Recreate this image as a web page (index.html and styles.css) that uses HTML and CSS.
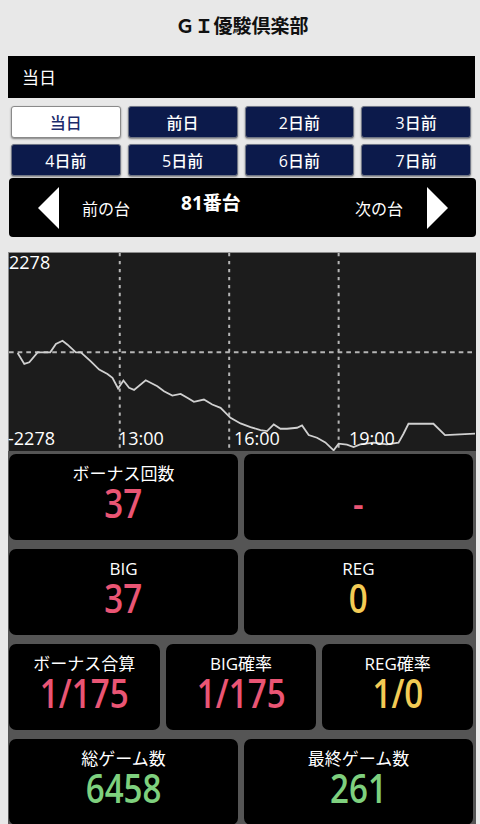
FILE: index.html
```html
<!DOCTYPE html>
<html lang="ja">
<head>
    <meta charset="UTF-8">
    <meta name="viewport" content="width=device-width, initial-scale=1.0">
    <title>ＧＩ優駿倶楽部</title>
    <link rel="stylesheet" href="styles.css">
</head>
<body>

    <h1 class="title">ＧＩ優駿倶楽部</h1>

    <div class="day-bar">当日</div>

    <div class="day-buttons">
        <button class="day-btn active">当日</button>
        <button class="day-btn">前日</button>
        <button class="day-btn">2日前</button>
        <button class="day-btn">3日前</button>
        <button class="day-btn">4日前</button>
        <button class="day-btn">5日前</button>
        <button class="day-btn">6日前</button>
        <button class="day-btn">7日前</button>
    </div>

    <div class="nav-bar">
        <a class="nav-prev">
            <svg width="21" height="42" viewBox="0 0 21 42"><polygon points="21,0 0,21 21,42" fill="#fff"/></svg>
            <span>前の台</span>
        </a>
        <span class="nav-current">81番台</span>
        <a class="nav-next">
            <span>次の台</span>
            <svg width="21" height="42" viewBox="0 0 21 42"><polygon points="0,0 21,21 0,42" fill="#fff"/></svg>
        </a>
    </div>

    <div class="chart">
        <svg class="chart-svg" viewBox="24 24 1404 596" preserveAspectRatio="none">
            <!-- grid -->
            <line class="grid-v" x1="357" y1="24" x2="357" y2="620"/>
            <line class="grid-v" x1="686" y1="24" x2="686" y2="620"/>
            <line class="grid-v" x1="1015" y1="24" x2="1015" y2="620"/>
            <line class="grid-h" x1="24" y1="323" x2="1428" y2="323"/>
            <!-- slump graph -->
            <polyline class="graph-line" points="50,325 70,358 85,353 110,323 148,323 165,298 185,288 200,300 225,323 240,323 270,350 295,375 320,388 335,400 352,432 368,408 385,430 400,436 435,407 470,425 490,440 515,453 540,448 560,460 580,472 610,465 635,480 660,490 690,520 720,537 750,548 780,557 800,560 820,540 840,553 860,553 890,550 905,543 925,572 950,580 975,594 1000,618 1015,598 1040,601 1060,608 1080,600 1120,595 1160,600 1195,595 1210,568 1225,538 1300,538 1335,572 1425,568"/>
        </svg>
        <span class="chart-label label-max">2278</span>
        <span class="chart-label label-min">-2278</span>
        <span class="chart-label label-time t13">13:00</span>
        <span class="chart-label label-time t16">16:00</span>
        <span class="chart-label label-time t19">19:00</span>
    </div>

    <div class="stats">
        <div class="stats-row cols-2">
            <div class="card">
                <span class="card-label">ボーナス回数</span>
                <span class="card-value pink">37</span>
            </div>
            <div class="card">
                <span class="card-label"></span>
                <span class="card-value pink">-</span>
            </div>
        </div>
        <div class="stats-row cols-2">
            <div class="card">
                <span class="card-label">BIG</span>
                <span class="card-value pink">37</span>
            </div>
            <div class="card">
                <span class="card-label">REG</span>
                <span class="card-value yellow">0</span>
            </div>
        </div>
        <div class="stats-row cols-3">
            <div class="card">
                <span class="card-label">ボーナス合算</span>
                <span class="card-value pink">1/175</span>
            </div>
            <div class="card">
                <span class="card-label">BIG確率</span>
                <span class="card-value pink">1/175</span>
            </div>
            <div class="card">
                <span class="card-label">REG確率</span>
                <span class="card-value yellow">1/0</span>
            </div>
        </div>
        <div class="stats-row cols-2">
            <div class="card">
                <span class="card-label">総ゲーム数</span>
                <span class="card-value green">6458</span>
            </div>
            <div class="card">
                <span class="card-label">最終ゲーム数</span>
                <span class="card-value green">261</span>
            </div>
        </div>
    </div>

</body>
</html>
```

FILE: styles.css
```css
body {
    margin: 0;
    padding: 0 4px 0 8px;
    background-color: #e8e8e8;
    font-family: "Open Sans", "Noto Sans CJK JP", sans-serif;
    color: #fff;
}
.title {
    margin: 0;
    padding: 12px 0 18px;
    font-family: "Noto Sans CJK JP", sans-serif;
    font-size: 19px;
    line-height: 26px;
    font-weight: 700;
    text-align: center;
    color: #111;
}
.day-bar {
    height: 42px;
    margin-right: 1px;
    padding-left: 14px;
    background-color: #000;
    font-family: "Noto Sans CJK JP", sans-serif;
    font-size: 17px;
    line-height: 42px;
}
.day-buttons {
    display: grid;
    grid-template-columns: repeat(4, 1fr);
    gap: 6px 7px;
    padding: 8px 5px 0 3px;
}
.day-btn {
    height: 32px;
    padding: 0;
    border: 1px solid #6f7585;
    border-radius: 3px;
    background-color: #0c1a4b;
    box-shadow: 0 1px 2px rgba(0, 0, 0, 0.45);
    font-family: "Open Sans", "Noto Sans CJK JP", sans-serif;
    font-size: 16px;
    font-weight: 500;
    color: #fff;
}
.day-btn.active {
    background-color: #fff;
    border-color: #8a8a8a;
    color: #1b2b6b;
}
.nav-bar {
    display: flex;
    align-items: center;
    height: 59px;
    margin: 2px 0 15px 1px;
    padding: 0 28px 0 29px;
    background-color: #000;
    border-radius: 4px;
    font-family: "Noto Sans CJK JP", sans-serif;
    font-size: 16px;
}
.nav-prev,
.nav-next {
    display: flex;
    align-items: center;
    gap: 23px;
}
.nav-current {
    margin: 0 0 12px 51px;
    font-family: "Open Sans", "Noto Sans CJK JP", sans-serif;
    font-size: 19px;
    font-weight: 700;
}
.nav-next {
    margin-left: auto;
    gap: 24px;
}
.chart {
    position: relative;
    height: 198px;
    border-top: 1px solid #8c8c8c;
    border-left: 1px solid #8c8c8c;
    background-color: #1c1c1c;
}
.chart-svg {
    display: block;
    width: 100%;
    height: 100%;
}
.grid-v {
    stroke: #b5b5b5;
    stroke-width: 6;
    stroke-dasharray: 10 14;
}
.grid-h {
    stroke: #b5b5b5;
    stroke-width: 6;
    stroke-dasharray: 14 12;
}
.graph-line {
    fill: none;
    stroke: #d0d0d0;
    stroke-width: 1.8;
    vector-effect: non-scaling-stroke;
}
.chart-label {
    position: absolute;
    font-size: 18px;
    line-height: 20px;
    color: #fff;
}
.label-max {
    left: 0;
    top: 0;
    line-height: 18px;
}
.label-min {
    left: -1px;
    top: 175px;
}
.label-time {
    top: 175px;
}
.t13 { left: 109px; }
.t16 { left: 225px; }
.t19 { left: 340px; }
.stats {
    display: flex;
    flex-direction: column;
    gap: 9px;
    padding: 3px 3px 0 1px;
    background-color: #555;
}
.stats-row {
    display: grid;
    gap: 6px;
}
.cols-2 {
    grid-template-columns: 1fr 1fr;
}
.cols-3 {
    grid-template-columns: 1fr 1fr 1fr;
}
.card {
    display: flex;
    flex-direction: column;
    align-items: center;
    height: 86px;
    padding-top: 10px;
    box-sizing: border-box;
    background-color: #000;
    border-radius: 7px;
}
.card-label {
    height: 20px;
    font-family: "Open Sans", "Noto Sans CJK JP", sans-serif;
    font-size: 17px;
    line-height: 20px;
}
.card-value {
    display: inline-block;
    font-size: 39px;
    font-weight: 600;
    line-height: 38px;
    transform: scaleX(0.85);
}
.pink { color: #ea5574; }
.yellow { color: #f3cb55; }
.green { color: #7ed07e; }
```
